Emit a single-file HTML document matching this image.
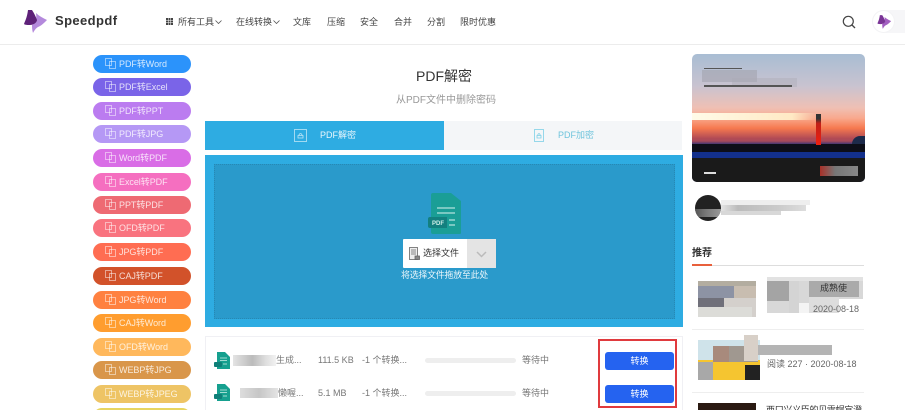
<!DOCTYPE html>
<html><head><meta charset="utf-8"><style>
*{box-sizing:border-box}
html,body{margin:0;padding:0;width:905px;height:410px;overflow:hidden;background:#fff;font-family:"Liberation Sans","Noto Sans CJK SC",sans-serif}
#w{position:absolute;left:0;top:0;width:905px;height:410px;overflow:hidden;filter:blur(.35px)}
.a{position:absolute}
.t{position:absolute;white-space:nowrap;line-height:1}
.nav{position:absolute;top:17px;font-size:9px;color:#444;white-space:nowrap;line-height:11px}
.b{position:absolute;left:93px;width:98px;height:18px;border-radius:9px;color:rgba(255,255,255,.8);font-size:9px;line-height:19px;padding-left:26px;white-space:nowrap;letter-spacing:-.05px}
.b svg{position:absolute;left:12px;top:3px}
.m{position:absolute}
.m i{position:absolute;display:block}
.r{position:absolute;font-size:9px;color:#777;white-space:nowrap;line-height:11px}
.btn{position:absolute;left:605px;width:69px;height:18px;background:#2563f0;border-radius:3px;color:#fff;font-size:9px;text-align:center;line-height:18px}
</style></head><body><div id="w">
<!-- header -->
<div class="a" style="left:0;top:0;width:905px;height:45px;background:#fff;border-bottom:1px solid #ececec"></div>
<svg class="a" style="left:22px;top:8px" width="26" height="27" viewBox="0 0 26 27"><path d="M14 5C17 8 21 10 25 12C22 15 19 18 16 19C14 20 12 23 11 25C10 22 10 19 10 17C13 16 15 12 14 5Z" fill="#b489dc"/><path d="M6 2L10 2C12 5 14 9 15 12C15 14 12 17 8 17C6 17 3 17 2 16C3 13 5 10 6 2Z" fill="#5e2179"/></svg>
<div class="t" style="left:55px;top:14px;font-size:13px;font-weight:bold;color:#333;letter-spacing:.4px">Speedpdf</div>
<svg class="a" style="left:166px;top:18px" width="7" height="7" viewBox="0 0 7 7" fill="#444"><rect width="2" height="2"/><rect x="2.5" width="2" height="2"/><rect x="5" width="2" height="2"/><rect y="2.5" width="2" height="2"/><rect x="2.5" y="2.5" width="2" height="2"/><rect x="5" y="2.5" width="2" height="2"/><rect y="5" width="2" height="2"/><rect x="2.5" y="5" width="2" height="2"/><rect x="5" y="5" width="2" height="2"/></svg>
<div class="nav" style="left:178px">所有工具</div>
<svg class="a" style="left:215px;top:20px" width="7" height="4" viewBox="0 0 7 4"><path d="M.5.5L3.5 3.5L6.5.5" fill="none" stroke="#555" stroke-width=".8"/></svg>
<div class="nav" style="left:236px">在线转换</div>
<svg class="a" style="left:273px;top:20px" width="7" height="4" viewBox="0 0 7 4"><path d="M.5.5L3.5 3.5L6.5.5" fill="none" stroke="#555" stroke-width=".8"/></svg>
<div class="nav" style="left:293px">文库</div>
<div class="nav" style="left:327px">压缩</div>
<div class="nav" style="left:360px">安全</div>
<div class="nav" style="left:394px">合并</div>
<div class="nav" style="left:427px">分割</div>
<div class="nav" style="left:460px">限时优惠</div>
<svg class="a" style="left:842px;top:15px" width="14" height="14" viewBox="0 0 14 14"><circle cx="6.3" cy="6.3" r="5" fill="none" stroke="#444" stroke-width="1.2"/><path d="M10 10L13 13" stroke="#444" stroke-width="1.3"/></svg>
<div class="a" style="left:884px;top:10px;width:21px;height:23px;background:#f6f6f8"></div>
<div class="a" style="left:872px;top:10px;width:23px;height:23px;border-radius:50%;background:#fff;border:1px solid #f3f3f5"></div>
<svg class="a" style="left:876px;top:14px" width="16" height="16" viewBox="0 0 26 27"><path d="M14 5C17 8 21 10 25 12C22 15 19 18 16 19C14 20 12 23 11 25C10 22 10 19 10 17C13 16 15 12 14 5Z" fill="#a25fc0"/><path d="M6 2L10 2C12 5 14 9 15 12C15 14 12 17 8 17C6 17 3 17 2 16C3 13 5 10 6 2Z" fill="#7a3596"/></svg>
<!-- sidebar -->
<div class="b" style="top:55px;background:#2b93fb"><svg width="11" height="11" viewBox="0 0 11 11" fill="none" stroke="rgba(255,255,255,.55)" stroke-width=".9"><rect x=".5" y=".5" width="6" height="7"/><rect x="4.5" y="3.5" width="6" height="7"/></svg>PDF转Word</div>
<div class="b" style="top:78px;background:#7a64e8"><svg width="11" height="11" viewBox="0 0 11 11" fill="none" stroke="rgba(255,255,255,.55)" stroke-width=".9"><rect x=".5" y=".5" width="6" height="7"/><rect x="4.5" y="3.5" width="6" height="7"/></svg>PDF转Excel</div>
<div class="b" style="top:102px;background:#bb7cf0"><svg width="11" height="11" viewBox="0 0 11 11" fill="none" stroke="rgba(255,255,255,.55)" stroke-width=".9"><rect x=".5" y=".5" width="6" height="7"/><rect x="4.5" y="3.5" width="6" height="7"/></svg>PDF转PPT</div>
<div class="b" style="top:125px;background:#b598f5"><svg width="11" height="11" viewBox="0 0 11 11" fill="none" stroke="rgba(255,255,255,.55)" stroke-width=".9"><rect x=".5" y=".5" width="6" height="7"/><rect x="4.5" y="3.5" width="6" height="7"/></svg>PDF转JPG</div>
<div class="b" style="top:149px;background:#d96de6"><svg width="11" height="11" viewBox="0 0 11 11" fill="none" stroke="rgba(255,255,255,.55)" stroke-width=".9"><rect x=".5" y=".5" width="6" height="7"/><rect x="4.5" y="3.5" width="6" height="7"/></svg>Word转PDF</div>
<div class="b" style="top:173px;background:#f56fc0"><svg width="11" height="11" viewBox="0 0 11 11" fill="none" stroke="rgba(255,255,255,.55)" stroke-width=".9"><rect x=".5" y=".5" width="6" height="7"/><rect x="4.5" y="3.5" width="6" height="7"/></svg>Excel转PDF</div>
<div class="b" style="top:196px;background:#ee6a73"><svg width="11" height="11" viewBox="0 0 11 11" fill="none" stroke="rgba(255,255,255,.55)" stroke-width=".9"><rect x=".5" y=".5" width="6" height="7"/><rect x="4.5" y="3.5" width="6" height="7"/></svg>PPT转PDF</div>
<div class="b" style="top:219px;background:#f9737f"><svg width="11" height="11" viewBox="0 0 11 11" fill="none" stroke="rgba(255,255,255,.55)" stroke-width=".9"><rect x=".5" y=".5" width="6" height="7"/><rect x="4.5" y="3.5" width="6" height="7"/></svg>OFD转PDF</div>
<div class="b" style="top:243px;background:#ff6d52"><svg width="11" height="11" viewBox="0 0 11 11" fill="none" stroke="rgba(255,255,255,.55)" stroke-width=".9"><rect x=".5" y=".5" width="6" height="7"/><rect x="4.5" y="3.5" width="6" height="7"/></svg>JPG转PDF</div>
<div class="b" style="top:267px;background:#d2522a"><svg width="11" height="11" viewBox="0 0 11 11" fill="none" stroke="rgba(255,255,255,.55)" stroke-width=".9"><rect x=".5" y=".5" width="6" height="7"/><rect x="4.5" y="3.5" width="6" height="7"/></svg>CAJ转PDF</div>
<div class="b" style="top:291px;background:#ff8140"><svg width="11" height="11" viewBox="0 0 11 11" fill="none" stroke="rgba(255,255,255,.55)" stroke-width=".9"><rect x=".5" y=".5" width="6" height="7"/><rect x="4.5" y="3.5" width="6" height="7"/></svg>JPG转Word</div>
<div class="b" style="top:314px;background:#ff9d2f"><svg width="11" height="11" viewBox="0 0 11 11" fill="none" stroke="rgba(255,255,255,.55)" stroke-width=".9"><rect x=".5" y=".5" width="6" height="7"/><rect x="4.5" y="3.5" width="6" height="7"/></svg>CAJ转Word</div>
<div class="b" style="top:338px;background:#ffb85c"><svg width="11" height="11" viewBox="0 0 11 11" fill="none" stroke="rgba(255,255,255,.55)" stroke-width=".9"><rect x=".5" y=".5" width="6" height="7"/><rect x="4.5" y="3.5" width="6" height="7"/></svg>OFD转Word</div>
<div class="b" style="top:361px;background:#d9964a"><svg width="11" height="11" viewBox="0 0 11 11" fill="none" stroke="rgba(255,255,255,.55)" stroke-width=".9"><rect x=".5" y=".5" width="6" height="7"/><rect x="4.5" y="3.5" width="6" height="7"/></svg>WEBP转JPG</div>
<div class="b" style="top:385px;background:#eec465"><svg width="11" height="11" viewBox="0 0 11 11" fill="none" stroke="rgba(255,255,255,.55)" stroke-width=".9"><rect x=".5" y=".5" width="6" height="7"/><rect x="4.5" y="3.5" width="6" height="7"/></svg>WEBP转JPEG</div>
<div class="b" style="top:408px;background:#e8d560"></div>
<!-- main -->
<div class="t" style="left:416px;top:69px;font-size:14px;color:#333">PDF解密</div>
<div class="t" style="left:396px;top:96px;font-size:10px;color:#999">从PDF文件中删除密码</div>
<div class="a" style="left:205px;top:121px;width:239px;height:29px;background:#2eace2"></div>
<div class="a" style="left:444px;top:121px;width:238px;height:29px;background:#f4f6f8"></div>
<svg class="a" style="left:294px;top:129px" width="13" height="13" viewBox="0 0 13 13" fill="none" stroke="#bfe6f6" stroke-width=".8"><rect x=".5" y=".5" width="12" height="12"/><path d="M4 9V6.5H9V9ZM5 6.5C5 4 8 4 8 6.5"/></svg>
<div class="t" style="left:320px;top:131px;font-size:9px;color:#e8f6fc">PDF解密</div>
<svg class="a" style="left:534px;top:129px" width="10" height="13" viewBox="0 0 10 13" fill="none" stroke="#7ed0e6" stroke-width=".8"><rect x=".5" y=".5" width="9" height="12"/><path d="M3 9V6.5H7V9ZM3.8 6.5C3.8 4 6.2 4 6.2 6.5"/></svg>
<div class="t" style="left:558px;top:131px;font-size:9px;color:#6fc4dc">PDF加密</div>
<div class="a" style="left:205px;top:155px;width:478px;height:172px;background:#2eace2"></div>
<div class="a" style="left:214px;top:164px;width:461px;height:155px;background:#2a9acb;border:1px dotted #2688b4"></div>
<!-- file icon -->
<svg class="a" style="left:427px;top:193px" width="36" height="43" viewBox="0 0 36 43"><path d="M6 0H24L34 8V40Q34 41 32 41H6Q4 41 4 39V2Q4 0 6 0Z" fill="#1a9e96"/><path d="M3 24H20V35H3Q1 35 1 33V26Q1 24 3 24Z" fill="#13807f"/><text x="5" y="32" font-size="6" font-weight="bold" fill="#cfeee8" font-family="Liberation Sans">PDF</text><path d="M10 15H28M10 20H28M22 27H28M22 32H28" stroke="#d8f3ee" stroke-width="1"/></svg>
<div class="a" style="left:403px;top:239px;width:64px;height:29px;background:#fff;border-radius:1px 0 0 1px"></div>
<div class="a" style="left:467px;top:239px;width:29px;height:29px;background:#e4e4e4"></div>
<svg class="a" style="left:409px;top:247px" width="11" height="14" viewBox="0 0 11 14" fill="none" stroke="#666" stroke-width=".8"><rect x=".5" y=".5" width="8" height="12" fill="#eee"/><path d="M2 3H7M2 5H7M2 7H7"/><rect x="6" y="9" width="4.5" height="3.5" fill="#888"/></svg>
<div class="t" style="left:423px;top:249px;font-size:9px;color:#333">选择文件</div>
<svg class="a" style="left:476px;top:251px" width="11" height="7" viewBox="0 0 11 7"><path d="M1 1L5.5 5.5L10 1" fill="none" stroke="#bbb" stroke-width="1.5"/></svg>
<div class="t" style="left:401px;top:271px;font-size:9px;color:#eaf6fb;letter-spacing:-.3px">将选择文件拖放至此处</div>
<!-- list -->
<div class="a" style="left:205px;top:336px;width:478px;height:80px;border:1px solid #f0f0f4;background:#fff"></div>
<svg class="a" style="left:214px;top:352px" width="16" height="18" viewBox="0 0 16 18"><path d="M3 0H11L16 5V17H3Z" fill="#16a08f"/><rect x="0" y="10" width="8" height="5" fill="#0f7f78" rx="1"/><path d="M6 6H13M6 8.5H13M9 12H13" stroke="#cfeee8" stroke-width=".7"/></svg>
<svg class="a" style="left:214px;top:384px" width="16" height="18" viewBox="0 0 16 18"><path d="M3 0H11L16 5V17H3Z" fill="#16a08f"/><rect x="0" y="10" width="8" height="5" fill="#0f7f78" rx="1"/><path d="M6 6H13M6 8.5H13M9 12H13" stroke="#cfeee8" stroke-width=".7"/></svg>
<div class="a" style="left:233px;top:355px;width:43px;height:11px;background:linear-gradient(90deg,#e4e4e4,#bbb 45%,#ddd 75%,#f2f2f2)"></div>
<div class="r" style="left:276px;top:355px">生成...</div>
<div class="a" style="left:240px;top:388px;width:38px;height:10px;background:linear-gradient(90deg,#ddd,#c6c6c6 50%,#e4e4e4)"></div>
<div class="r" style="left:278px;top:388px">懒喔...</div>
<div class="r" style="left:318px;top:355px">111.5 KB</div>
<div class="r" style="left:318px;top:388px">5.1 MB</div>
<div class="r" style="left:362px;top:355px">-1 个转换...</div>
<div class="r" style="left:362px;top:388px">-1 个转换...</div>
<div class="a" style="left:425px;top:358px;width:91px;height:5px;border-radius:3px;background:#eee"></div>
<div class="a" style="left:425px;top:391px;width:91px;height:5px;border-radius:3px;background:#eee"></div>
<div class="r" style="left:522px;top:355px">等待中</div>
<div class="r" style="left:522px;top:388px">等待中</div>
<div class="btn" style="top:352px">转换</div>
<div class="btn" style="top:385px">转换</div>
<div class="a" style="left:598px;top:339px;width:79px;height:69px;border:2px solid #e03a3e"></div>
<!-- right photo -->
<div class="a" style="left:692px;top:54px;width:173px;height:128px;border-radius:5px;overflow:hidden;background:linear-gradient(180deg,#a9bdd3 0%,#c9c3d0 25%,#efc0b4 42%,#f9a98e 50%,#f6794f 58%,#b04a55 66%,#a84a5a 68%,#24307a 71%,#1b2860 75%)">
<div class="a" style="left:0;top:59px;width:125px;height:7px;background:linear-gradient(90deg,#fffbe8,#ffe9c4 80%,rgba(255,230,190,0));"></div>
<div class="a" style="left:0;top:90px;width:173px;height:8px;background:#0d0e18"></div>
<div class="a" style="left:0;top:98px;width:173px;height:6px;background:#13308c"></div>
<div class="a" style="left:0;top:104px;width:173px;height:24px;background:#1a1a1a"></div>
<div class="a" style="left:124px;top:60px;width:5px;height:31px;background:linear-gradient(180deg,#333 0 15%,#c02018 30%,#f02010)"></div>
<div class="a" style="left:10px;top:16px;width:55px;height:12px;background:rgba(160,160,172,.55)"></div>
<div class="a" style="left:40px;top:24px;width:65px;height:9px;background:rgba(170,170,180,.4)"></div>
<div class="a" style="left:12px;top:31px;width:88px;height:2px;background:#555"></div>
<div class="a" style="left:12px;top:14px;width:38px;height:1px;background:#555"></div>
<div class="a" style="left:12px;top:118px;width:12px;height:2px;background:#ddd"></div>
<div class="a" style="left:128px;top:112px;width:38px;height:10px;background:linear-gradient(90deg,#a83028,#777 40%,#888)"></div>
<div class="a" style="left:160px;top:82px;width:13px;height:8px;background:#1d2a4a;border-radius:8px 0 0 0"></div>
</div>
<!-- author -->
<div class="a" style="left:695px;top:195px;width:26px;height:26px;border-radius:50%;background:#222;overflow:hidden"><div class="a" style="left:0;top:14px;width:26px;height:8px;background:linear-gradient(90deg,#555,#777 40%,#999)"></div></div>
<div class="a" style="left:721px;top:200px;width:89px;height:5px;background:#eee"></div>
<div class="a" style="left:721px;top:205px;width:85px;height:6px;background:linear-gradient(90deg,#e4e4e4,#bbb 20%,#ccc 70%,#ddd)"></div>
<div class="a" style="left:721px;top:211px;width:60px;height:4px;background:#d8d8d8"></div>
<!-- recommend -->
<div class="t" style="left:692px;top:249px;font-size:10px;color:#333;font-weight:bold">推荐</div>
<div class="a" style="left:692px;top:265px;width:172px;height:1px;background:#ddd"></div>
<div class="a" style="left:692px;top:264px;width:20px;height:2px;background:#e8603c"></div>
<div class="m" style="left:698px;top:281px;width:58px;height:36px;background:#d4d0cc">
<i style="left:0;top:0;width:58px;height:5px;background:#b3ada0"></i>
<i style="left:0;top:5px;width:36px;height:12px;background:#8d93a4"></i>
<i style="left:0;top:17px;width:26px;height:9px;background:#70707a"></i>
<i style="left:0;top:26px;width:54px;height:10px;background:#dcdcd8"></i>
<i style="left:36px;top:5px;width:22px;height:12px;background:#c8bdb0"></i>
</div>
<div class="m" style="left:767px;top:277px;width:96px;height:36px;background:#d8d8d8">
<i style="left:0;top:0;width:96px;height:4px;background:#e2e2e2"></i>
<i style="left:0;top:4px;width:22px;height:20px;background:#a4a4a4"></i>
<i style="left:22px;top:4px;width:10px;height:32px;background:#d4d4d4"></i>
<i style="left:42px;top:4px;width:50px;height:16px;background:#aaa"></i>
<i style="left:32px;top:26px;width:10px;height:10px;background:#f4f4f4"></i>
<i style="left:42px;top:20px;width:30px;height:16px;background:#ddd"></i>
<i style="left:72px;top:22px;width:24px;height:14px;background:#fff"></i>
</div>
<div class="r" style="left:820px;top:283px;font-size:9px;color:#333">成熟使</div>
<div class="r" style="left:813px;top:304px;font-size:9px;color:#666">2020-08-18</div>
<div class="a" style="left:692px;top:329px;width:172px;height:1px;background:#eee"></div>
<div class="m" style="left:698px;top:340px;width:62px;height:40px;background:#f5c530">
<i style="left:0;top:0;width:62px;height:20px;background:#cfe3ea"></i>
<i style="left:0;top:22px;width:15px;height:18px;background:#a8a8a8"></i>
<i style="left:47px;top:25px;width:15px;height:15px;background:#222"></i>
<i style="left:15px;top:20px;width:32px;height:20px;background:#f5c530"></i>
<i style="left:15px;top:6px;width:16px;height:16px;background:#a88a7c"></i>
<i style="left:31px;top:6px;width:29px;height:16px;background:#a09890"></i>
</div>
<div class="a" style="left:744px;top:335px;width:14px;height:26px;background:#d8d0c8"></div>
<div class="a" style="left:758px;top:345px;width:74px;height:10px;background:#b4b4b4"></div>
<div class="r" style="left:767px;top:359px;color:#666">阅读 227 · 2020-08-18</div>
<div class="a" style="left:692px;top:392px;width:172px;height:1px;background:#eee"></div>
<div class="a" style="left:698px;top:403px;width:58px;height:7px;background:#2a1a12"></div>
<div class="r" style="left:766px;top:405px;font-size:9px;color:#333;letter-spacing:-.3px">西口兴义臣的贝雷帽宫澄</div>
</div></body></html>
